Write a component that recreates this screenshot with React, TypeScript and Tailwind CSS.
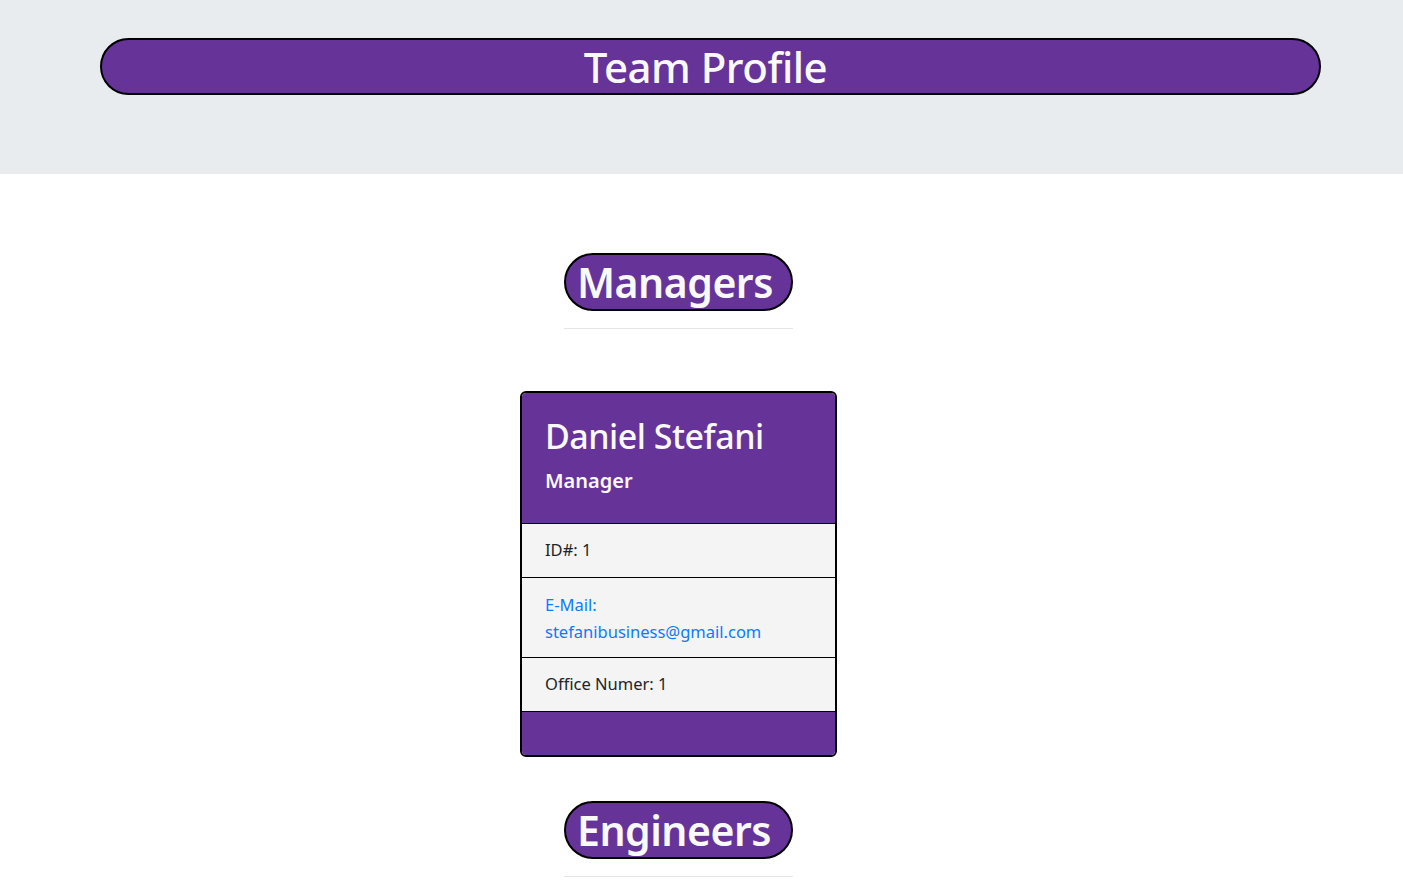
export default function App() {
  const font = { fontFamily: '"Noto Sans", "Open Sans", sans-serif' };
  return (
    <div className="min-h-screen bg-white" style={font}>
      <header className="h-[174px] bg-[#e8ecef] pt-[38px]">
        <div className="ml-[100px] w-[1221px] h-[57px] rounded-full border-2 border-black bg-[#663399] flex items-center justify-center">
          <h1 className="mr-[10px] text-[42px] font-medium leading-none text-[#f8f9fa] tracking-[-0.5px]">Team Profile</h1>
        </div>
      </header>

      <main className="ml-[520px] w-[317px] flex flex-col items-center">
        <SectionTitle title="Managers" className="mt-[79px]" />

        <div className="mt-[62px] w-[317px] rounded-md border-2 border-black overflow-hidden">
          <div className="bg-[#663399] h-[130px] px-[23px] pt-[22px] text-[#f8f9fa]">
            <h2 className="text-[34px] font-medium leading-tight tracking-[-0.5px]">Daniel Stefani</h2>
            <h3 className="mt-[10px] text-[20px] font-semibold leading-tight">Manager</h3>
          </div>
          <ul className="bg-[#f4f4f4] text-[16.5px] text-[#212529]">
            <li className="border-t border-black h-[54px] px-[23px] flex items-center">ID#: 1</li>
            <li className="border-t border-black h-[80px] px-[23px] flex items-center text-[#0b7bff] leading-[27px]">
              <span>
                E-Mail:
                <br />
                stefanibusiness@gmail.com
              </span>
            </li>
            <li className="border-t border-y border-black h-[55px] px-[23px] flex items-center">Office Numer: 1</li>
          </ul>
          <div className="bg-[#663399] h-[43px]" />
        </div>

        <SectionTitle title="Engineers" className="mt-[44px]" />
      </main>
    </div>
  );
}

function SectionTitle({ title, className }: { title: string; className?: string }) {
  return (
    <div className={`flex flex-col items-center ${className ?? ''}`}>
      <div className="w-[229px] h-[58px] rounded-full border-2 border-black bg-[#663399] flex items-center justify-start pl-[11px]">
        <h2 className="text-[41px] font-semibold leading-none text-[#f8f9fa] tracking-[-0.5px]">{title}</h2>
      </div>
      <hr className="mt-[17px] w-[229px] border-t border-[#e5e5e5]" />
    </div>
  );
}
